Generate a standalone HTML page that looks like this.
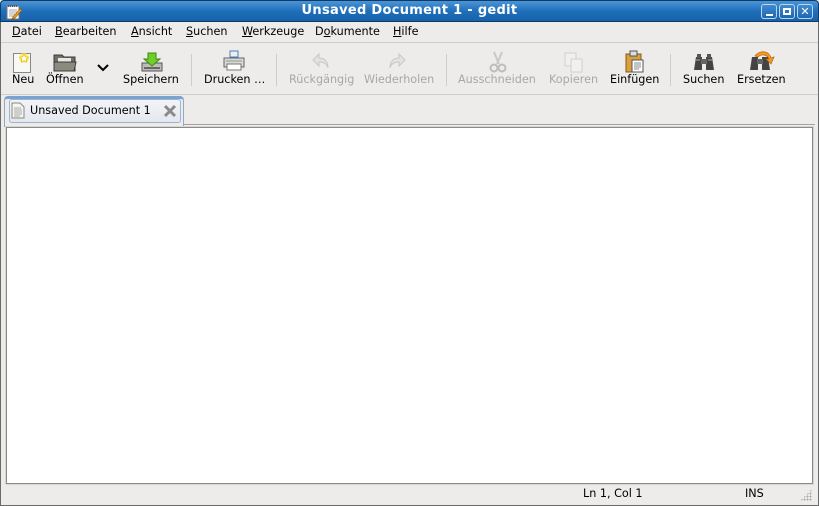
<!DOCTYPE html>
<html><head><meta charset="utf-8"><style>
*{margin:0;padding:0;box-sizing:border-box}
body{width:819px;height:506px;overflow:hidden;background:#edeceb;font-family:"DejaVu Sans","Liberation Sans",sans-serif;font-size:11.2px;color:#000;position:relative}
.abs{position:absolute}
#title{left:0;top:0;width:819px;height:22px;background:linear-gradient(#4b95d6,#1f6fba 50%,#1862ab);border:1px solid #0f3a66;border-radius:4px 4px 0 0}
#title .t{position:absolute;left:0;right:0;top:2px;text-align:center;color:#fff;font-weight:bold;font-size:13px;letter-spacing:.3px}
.wb{position:absolute;top:3px;width:16px;height:15px;border:1px solid #bcd6ef;border-radius:3px;background:linear-gradient(#3f8ad0,#1c67b0)}
#frame{left:0;top:22px;width:819px;height:484px;border:1px solid #6a6a6a;border-top:none}
.menu{top:25px;height:16px}
.menu span{position:absolute;top:0}
.mline{left:1px;top:42px;width:817px;height:1px;background:#cfcdc9}
.tb{top:73px}
.dis{color:#a8a7a5}
.sep{top:54px;width:1px;height:32px;background:#cfcdc9}
.tline{left:1px;top:94px;width:817px;height:1px;background:#cfcdc9}
#tabwrap{left:4px;top:96px;width:180px;height:31px;border:1px solid #8fa9c7;border-bottom:none;border-radius:4px 4px 0 0;background:#edeceb;border-top:3px solid #7ba3d1}
#tab{left:9px;top:99px;width:172px;height:24px;border:1px solid #9cb4cf;border-radius:3px;background:linear-gradient(#f2f4f7,#e4e8ee)}
#edit{left:6px;top:127px;width:807px;height:357px;background:#fff;border:1px solid #8a8a88;box-shadow:0 0 0 1px #d8d6d3}
#tabline{left:184px;top:124px;width:631px;height:1px;background:#a5a3a0}
.st{top:487px}
</style></head><body>
<div id="title" class="abs">
 <svg class="abs" style="left:4px;top:2px" width="18" height="18" viewBox="0 0 18 18"><rect x="2" y="3" width="12" height="13" fill="#fff" stroke="#777"/><path d="M3 3h10" stroke="#555" stroke-dasharray="1 1" stroke-width="2"/><path d="M4 7h8M4 9h8M4 11h6M4 13h6" stroke="#aaa"/><path d="M8 14l7-8 2 1-7 8-3 1z" fill="#f5a623" stroke="#a05a00" stroke-width=".7"/></svg>
 <div class="t">Unsaved Document 1 - gedit</div>
 <div class="wb" style="left:760px"><div style="position:absolute;left:4px;top:9px;width:7px;height:2px;background:#fff"></div></div>
 <div class="wb" style="left:778px"><div style="position:absolute;left:3px;top:3px;width:8px;height:7px;border:2px solid #fff"></div></div>
 <div class="wb" style="left:796px;color:#fff;font-weight:bold;font-size:11px;line-height:13px;text-align:center">✕</div>
</div>
<div id="frame" class="abs"></div>
<div class="abs menu" style="left:0;width:819px">
 <span style="left:12px"><u>D</u>atei</span>
 <span style="left:55px"><u>B</u>earbeiten</span>
 <span style="left:131px"><u>A</u>nsicht</span>
 <span style="left:186px"><u>S</u>uchen</span>
 <span style="left:242px"><u>W</u>erkzeuge</span>
 <span style="left:315px">D<u>o</u>kumente</span>
 <span style="left:393px"><u>H</u>ilfe</span>
</div>
<div class="abs mline"></div>
<svg class="abs" style="left:12px;top:51px" width="22" height="22"><rect x="1.5" y="2.5" width="17" height="19" fill="#f8f8f4" stroke="#888"/><circle cx="12" cy="7" r="5" fill="#ffe94d" opacity=".8"/><path d="M12 3l1.3 2.8 3 .3-2.2 2 .6 3-2.7-1.5-2.7 1.5.6-3-2.2-2 3-.3z" fill="#fff" stroke="#e8b800" stroke-width=".7"/></svg>
<svg class="abs" style="left:53px;top:52px" width="24" height="20"><path d="M1 3h8l2 2h11v14H1z" fill="#6f6f66" stroke="#3d3d38"/><rect x="5" y="6" width="13" height="8" fill="#e8e8e4"/><path d="M1 10h22l-2 9H1z" fill="#8b8b80" stroke="#3d3d38"/></svg>
<svg class="abs" style="left:97px;top:64px" width="12" height="8"><path d="M1 1l5 5 5-5" fill="none" stroke="#000" stroke-width="2"/></svg>
<svg class="abs" style="left:140px;top:51px" width="24" height="22"><path d="M2 12h20v8H2z" fill="#bdbdb6" stroke="#555"/><rect x="4" y="16" width="16" height="2" fill="#666"/><path d="M8 2h8v6h4l-8 7-8-7h4z" fill="#6fcf2a" stroke="#3a8a10"/></svg>
<div class="abs sep" style="left:191px"></div>
<svg class="abs" style="left:222px;top:50px" width="24" height="22"><rect x="8" y="1" width="8" height="6" fill="#eee" stroke="#4a7fc0"/><path d="M2 8h20v9H2z" fill="#d8d8d4" stroke="#666"/><rect x="5" y="14" width="14" height="6" fill="#fff" stroke="#777"/><path d="M4 11h16" stroke="#999"/></svg>
<div class="abs sep" style="left:276px"></div>
<svg class="abs" style="left:311px;top:52px" width="20" height="18"><path d="M8 2L2 8l6 6V10c5 0 8 2 9 6 0-6-3-10-9-10z" fill="#e2e2e0" stroke="#c8c8c6"/></svg>
<svg class="abs" style="left:387px;top:52px" width="20" height="18"><path d="M12 2l6 6-6 6V10c-5 0-8 2-9 6 0-6 3-10 9-10z" fill="#e2e2e0" stroke="#c8c8c6"/></svg>
<div class="abs sep" style="left:446px"></div>
<svg class="abs" style="left:487px;top:51px" width="22" height="22"><path d="M7 1l5 12M15 1l-5 12" stroke="#c8c8c6" stroke-width="2"/><circle cx="7" cy="17" r="3.5" fill="none" stroke="#bdbdbb" stroke-width="2"/><circle cx="15" cy="17" r="3.5" fill="none" stroke="#bdbdbb" stroke-width="2"/></svg>
<svg class="abs" style="left:563px;top:51px" width="22" height="22"><rect x="2" y="2" width="11" height="13" fill="#f0f0ee" stroke="#cfcfcd"/><rect x="8" y="8" width="11" height="13" fill="#f0f0ee" stroke="#cfcfcd"/></svg>
<svg class="abs" style="left:624px;top:50px" width="22" height="24"><rect x="2" y="4" width="15" height="18" fill="#d8a040" stroke="#8a5a10"/><rect x="6" y="1" width="7" height="5" fill="#ddd" stroke="#555"/><rect x="8" y="10" width="11" height="12" fill="#fff" stroke="#555"/><path d="M10 13h7M10 15h7M10 17h7M10 19h5" stroke="#888"/></svg>
<div class="abs sep" style="left:670px"></div>
<svg class="abs" style="left:693px;top:52px" width="22" height="20"><path d="M3 5h6v13H1z" fill="#444"/><path d="M13 5h6l2 13h-8z" fill="#444"/><rect x="8" y="7" width="6" height="5" fill="#666"/><rect x="4" y="2" width="4" height="4" fill="#555"/><rect x="14" y="2" width="4" height="4" fill="#555"/><path d="M3 8h4M15 8h4" stroke="#aaa"/></svg>
<svg class="abs" style="left:749px;top:50px" width="26" height="22"><path d="M3 7h6v13H1z" fill="#444"/><path d="M13 7h6l2 13h-8z" fill="#444"/><rect x="8" y="9" width="6" height="5" fill="#666"/><path d="M6 6C10 0 20 0 22 8l3-1-3 7-5-5 3 0C18 4 12 4 9 7z" fill="#f59a1e" stroke="#b8600a" stroke-width=".7"/></svg>
<div class="abs tb" style="left:12px">Neu</div>
<div class="abs tb" style="left:46px">Öffnen</div>
<div class="abs tb" style="left:123px">Speichern</div>
<div class="abs tb" style="left:204px">Drucken …</div>
<div class="abs tb dis" style="left:289px">Rückgängig</div>
<div class="abs tb dis" style="left:364px">Wiederholen</div>
<div class="abs tb dis" style="left:458px">Ausschneiden</div>
<div class="abs tb dis" style="left:549px">Kopieren</div>
<div class="abs tb" style="left:610px">Einfügen</div>
<div class="abs tb" style="left:683px">Suchen</div>
<div class="abs tb" style="left:737px">Ersetzen</div>
<div class="abs tline"></div>
<div id="tabline" class="abs"></div>
<div id="tabwrap" class="abs"></div>
<div id="tab" class="abs"></div>
<svg class="abs" style="left:11px;top:102px" width="14" height="17"><path d="M1 1h8l4 4v11H1z" fill="#f4f4f0" stroke="#888"/><path d="M3 6h7M3 8h8M3 10h8M3 12h8M3 14h6" stroke="#aaa"/></svg>
<div class="abs" style="left:30px;top:104px">Unsaved Document 1</div>
<svg class="abs" style="left:163px;top:104px" width="14" height="14"><path d="M2 2l10 10M12 2L2 12" stroke="#8a8a88" stroke-width="3"/></svg>
<div id="edit" class="abs"></div>
<div class="abs st" style="left:583px">Ln 1, Col 1</div>
<div class="abs st" style="left:745px">INS</div>
<div class="abs" style="left:800px;top:489px;width:12px;height:12px;background:radial-gradient(circle,#a8a6a2 40%,transparent 45%) 0 0/3px 3px;clip-path:polygon(100% 0,100% 100%,0 100%)"></div>
</body></html>
